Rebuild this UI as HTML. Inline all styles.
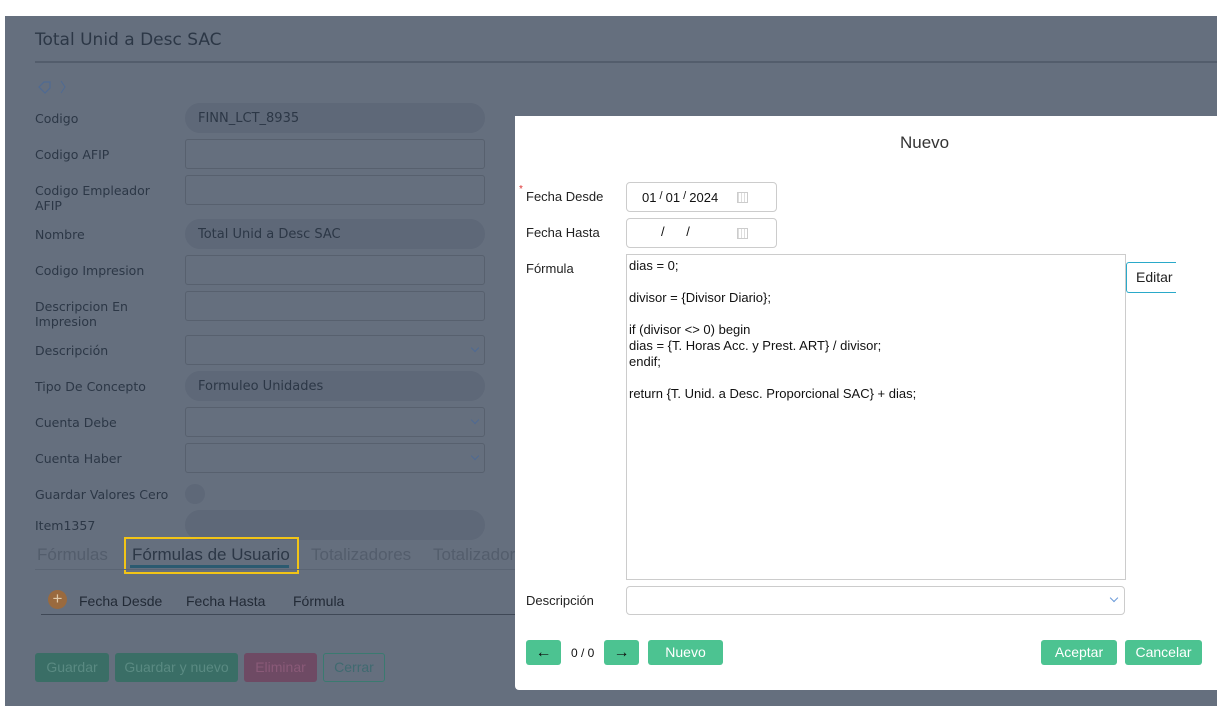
<!DOCTYPE html>
<html><head><meta charset="utf-8"><style>
*{box-sizing:border-box;margin:0;padding:0}
body{width:1217px;height:706px;position:relative;background:#fff;font-family:"DejaVu Sans","Liberation Sans",sans-serif;overflow:hidden}
.ov{position:absolute;left:5px;top:16px;width:1212px;height:690px;background:#656f7e}
.a{position:absolute}
.lbl{position:absolute;left:35px;font-size:12.5px;color:#2c3746;line-height:15px}
.fld{position:absolute;left:185px;width:300px;height:30px;border:1px solid #57606e;border-radius:3px}
.ro{background:#5e6878;border:none;border-radius:15px;font-size:13px;color:#2c3746;padding:8px 13px}
.chev{position:absolute;right:6px;top:9px;width:6px;height:6px;border-right:1px solid #4f6a93;border-bottom:1px solid #4f6a93;transform:rotate(45deg)}
.m{position:absolute;left:515px;top:116px;width:702px;height:574px;background:#fff;border-radius:0 0 0 4px;font-family:"Liberation Sans",sans-serif}
.ml{position:absolute;left:11px;font-size:13px;color:#222}
.inp{position:absolute;border:1px solid #ccc;border-radius:4px;background:#fff}
.btn{position:absolute;background:#4cc391;color:#fff;border-radius:3px;font-family:"Liberation Sans",sans-serif;font-size:14px;text-align:center;line-height:25px;height:25px;top:524px}
.cal{position:absolute;width:11px;height:11px;border:1px solid #ccc;top:9px;left:110px;background:repeating-linear-gradient(90deg,#ddd 0 1px,#fff 1px 3px)}
pre{font-family:"Liberation Sans",sans-serif;font-size:13px;line-height:16px;color:#111}
.tab{position:absolute;top:545px;font-size:17px;font-family:'Liberation Sans',sans-serif}
</style></head><body>
<div class="ov"></div>
<div class="a" style="left:35px;top:30px;font-size:17px;color:#2c3746">Total Unid a Desc SAC</div>
<div class="a" style="left:35px;top:61px;width:1182px;height:2px;background:#535d6c"></div>
<svg class="a" style="left:37px;top:79px" width="32" height="16"><path d="M2 8 L7 3 L13 3 L13 9 L8 14 Z" fill="none" stroke="#4f6a93" stroke-width="1.2"/><path d="M24 2 L28 8 L24 14" fill="none" stroke="#4f6a93" stroke-width="1"/></svg>
<div class="lbl" style="top:111px">Codigo</div><div class="fld ro" style="top:103px">FINN_LCT_8935</div>
<div class="lbl" style="top:147px">Codigo AFIP</div><div class="fld" style="top:139px"></div>
<div class="lbl" style="top:183px">Codigo Empleador<br>AFIP</div><div class="fld" style="top:175px"></div>
<div class="lbl" style="top:227px">Nombre</div><div class="fld ro" style="top:219px">Total Unid a Desc SAC</div>
<div class="lbl" style="top:263px">Codigo Impresion</div><div class="fld" style="top:255px"></div>
<div class="lbl" style="top:299px">Descripcion En<br>Impresion</div><div class="fld" style="top:291px"></div>
<div class="lbl" style="top:343px">Descripción</div><div class="fld" style="top:335px"><div class="chev"></div></div>
<div class="lbl" style="top:379px">Tipo De Concepto</div><div class="fld ro" style="top:371px">Formuleo Unidades</div>
<div class="lbl" style="top:415px">Cuenta Debe</div><div class="fld" style="top:407px"><div class="chev"></div></div>
<div class="lbl" style="top:451px">Cuenta Haber</div><div class="fld" style="top:443px"><div class="chev"></div></div>
<div class="lbl" style="top:487px">Guardar Valores Cero</div><div class="a" style="left:185px;top:484px;width:20px;height:20px;border-radius:50%;background:#5e6878"></div>
<div class="lbl" style="top:518px">Item1357</div><div class="a" style="left:185px;top:510px;width:300px;height:30px;border-radius:15px;background:#5e6878"></div>
<div class="tab" style="left:37px;color:#535d6c">Fórmulas</div>
<div class="a" style="left:124px;top:537px;width:175px;height:37px;border:2px solid #f2c416"></div>
<div class="tab" style="left:132px;color:#2c3746">Fórmulas de Usuario</div>
<div class="a" style="left:130px;top:565px;width:159px;height:3px;background:#2b5a70"></div>
<div class="tab" style="left:311px;color:#535d6c">Totalizadores</div>
<div class="tab" style="left:433px;color:#535d6c">Totalizador</div>
<div class="a" style="left:35px;top:569px;width:480px;height:1px;background:#5a6473"></div>
<div class="a" style="left:48px;top:590px;width:19px;height:19px;border-radius:50%;background:#9a6a3e;color:#e0c9a8;font-size:17px;line-height:18px;text-align:center;font-family:'Liberation Sans'">+</div>
<div class="a" style="left:79px;top:593px;font-size:14px;color:#222a36;font-family:'Liberation Sans'">Fecha Desde</div>
<div class="a" style="left:186px;top:593px;font-size:14px;color:#222a36;font-family:'Liberation Sans'">Fecha Hasta</div>
<div class="a" style="left:293px;top:593px;font-size:14px;color:#222a36;font-family:'Liberation Sans'">Fórmula</div>
<div class="a" style="left:41px;top:614px;width:474px;height:1px;background:#3f4856"></div>
<div class="a" style="left:35px;top:653px;width:74px;height:29px;background:#3a6e66;border-radius:3px;color:#5a8a82;font:14px/29px 'Liberation Sans';text-align:center">Guardar</div>
<div class="a" style="left:115px;top:653px;width:123px;height:29px;background:#3a6e66;border-radius:3px;color:#5a8a82;font:14px/29px 'Liberation Sans';text-align:center">Guardar y nuevo</div>
<div class="a" style="left:244px;top:653px;width:73px;height:29px;background:#6e4a64;border-radius:3px;color:#8a5a78;font:14px/29px 'Liberation Sans';text-align:center">Eliminar</div>
<div class="a" style="left:323px;top:653px;width:62px;height:29px;border:1px solid #3a7a70;border-radius:3px;color:#3f6a70;font:14px/27px 'Liberation Sans';text-align:center">Cerrar</div>

<div class="m">
<div class="a" style="left:385px;top:17px;font-size:17px;color:#333">Nuevo</div>
<div class="a" style="left:4px;top:68px;color:#d33;font-size:10px">*</div>
<div class="ml" style="top:73px">Fecha Desde</div>
<div class="inp" style="left:111px;top:66px;width:151px;height:30px;font-size:13px;padding:7px 15px;color:#111">01<span style="font-size:11px;position:relative;top:-3px"> / </span>01<span style="font-size:11px;position:relative;top:-3px"> / </span>2024<div class="cal"></div></div>
<div class="ml" style="top:109px">Fecha Hasta</div>
<div class="inp" style="left:111px;top:102px;width:151px;height:30px;font-size:13px;padding:5px 34px;color:#111">/ &nbsp; &nbsp; &nbsp;/<div class="cal"></div></div>
<div class="ml" style="top:145px">Fórmula</div>
<div class="inp" style="left:111px;top:138px;width:500px;height:326px;border-radius:0;padding:3px 2px"><pre>dias = 0;

divisor = {Divisor Diario};

if (divisor &lt;&gt; 0) begin
dias = {T. Horas Acc. y Prest. ART} / divisor;
endif;

return {T. Unid. a Desc. Proporcional SAC} + dias;</pre></div>
<div class="a" style="left:611px;top:146px;width:50px;height:31px;border:1px solid #2aa9c9;border-right:none;border-radius:3px 0 0 3px;font:14px/29px 'Liberation Sans';padding-left:9px;color:#222">Editar</div>
<div class="ml" style="top:477px">Descripción</div>
<div class="inp" style="left:111px;top:470px;width:499px;height:29px"><div class="chev" style="border-color:#6a9ad9;top:8px;right:7px"></div></div>
<div class="btn" style="left:11px;width:35px;color:#111;font-size:16px">&#8592;</div>
<div class="a" style="left:56px;top:530px;font:12px 'Liberation Sans';color:#111">0 / 0</div>
<div class="btn" style="left:89px;width:35px;color:#111;font-size:16px">&#8594;</div>
<div class="btn" style="left:133px;width:75px">Nuevo</div>
<div class="btn" style="left:526px;width:76px">Aceptar</div>
<div class="btn" style="left:610px;width:77px">Cancelar</div>
</div>
</body></html>
